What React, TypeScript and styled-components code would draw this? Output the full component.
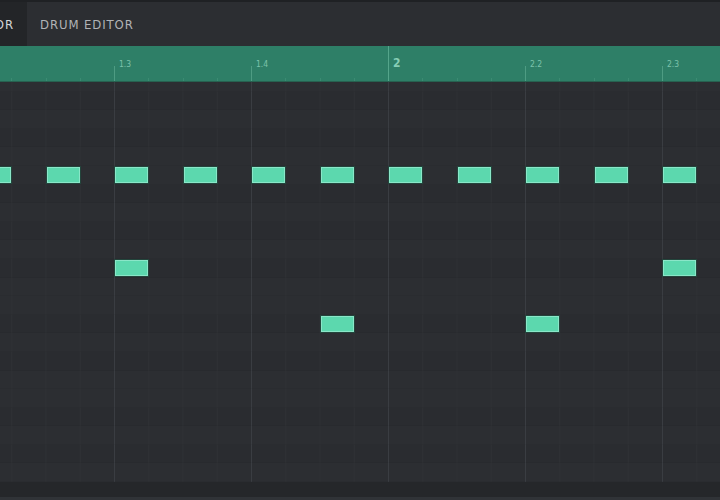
import React from "react";
import styled, { createGlobalStyle } from "styled-components";

// timeline geometry: one 16th step, one beat = 4 steps
const STEP = 34.25;
const BEAT = STEP * 4;
const COLS = 23;
const ROW_H = 18.6;
const ROWS = 23;

// piano-ish shading pattern for the lanes
const DARK_ROWS = [0, 1, 0, 1, 0, 0, 1, 0, 1, 0, 1, 0];

const NOTES: Record<number, number[]> = {
    5: [0, 2, 4, 6, 8, 10, 12, 14, 16, 18, 20],
    10: [4, 20],
    13: [10, 16],
};

const GlobalStyle = createGlobalStyle`
    html, body {
        margin: 0;
        padding: 0;
        background: #2a2c30;
    }
    body {
        font-family: "DejaVu Sans Condensed", "DejaVu Sans", sans-serif;
    }
`;

const Editor = styled.div`
    width: 720px;
    height: 500px;
    display: flex;
    flex-direction: column;
    overflow: hidden;
    background: #2a2c30;
`;

const TabBar = styled.div`
    height: 44px;
    flex: none;
    display: flex;
    background: #2c2e32;
    border-top: 2px solid #1f2124;
`;

const Tab = styled.div<{ $active?: boolean }>`
    display: flex;
    align-items: center;
    padding: 0 13px;
    white-space: nowrap;
    font-size: 13px;
    letter-spacing: 0.9px;
    font-stretch: condensed;
    color: ${(p) => (p.$active ? "#d4d6d8" : "#b1b3b6")};
    background: ${(p) => (p.$active ? "#232528" : "transparent")};
`;

// the active tab is scrolled partly off the left edge
const ClippedTab = styled(Tab)`
    width: 27px;
    box-sizing: border-box;
    padding-left: 0;
    justify-content: flex-end;
    overflow: hidden;
`;

const Ruler = styled.div`
    height: 35px;
    flex: none;
    background: #2e7f67;
    border-bottom: 1px solid #276250;
    overflow: hidden;
`;

const RulerTrack = styled.div`
    display: grid;
    grid-template-columns: repeat(${COLS}, ${STEP}px);
    margin-left: -23px;
    height: 100%;
`;

type TickKind = "bar" | "beat" | "step";

const tickLine: Record<TickKind, string> = {
    bar: "linear-gradient(#55a58b, #55a58b) no-repeat left bottom / 1px 100%",
    beat: "linear-gradient(#4e9c83, #4e9c83) no-repeat left bottom / 1px 15px",
    step: "linear-gradient(#3b8b72, #3b8b72) no-repeat left bottom / 1px 3px",
};

const RulerCell = styled.div<{ $kind: TickKind }>`
    background: ${(p) => tickLine[p.$kind]};
    padding: ${(p) => (p.$kind === "bar" ? "10px 0 0 5px" : "13px 0 0 5px")};
    font-family: "DejaVu Sans Condensed", "DejaVu Sans", sans-serif;
    font-size: ${(p) => (p.$kind === "bar" ? "12px" : "8.5px")};
    font-weight: ${(p) => (p.$kind === "bar" ? 700 : 400)};
    color: ${(p) => (p.$kind === "bar" ? "#86cdb5" : "#7cc2aa")};
    white-space: nowrap;
`;

const Grid = styled.div`
    flex: 1;
    overflow: hidden;
`;

const Lanes = styled.div`
    margin-top: -9px;
    margin-left: -23px;
    display: flex;
    flex-direction: column;
`;

const Lane = styled.div<{ $dark: boolean }>`
    height: ${ROW_H}px;
    flex: none;
    display: grid;
    grid-template-columns: repeat(${COLS}, ${STEP}px);
    align-items: center;
    background-color: ${(p) => (p.$dark ? "#2a2c30" : "#2c2e32")};
    background-image: linear-gradient(90deg, #3a3d42 0 1px, transparent 1px),
        linear-gradient(90deg, #2f3135 0 1px, transparent 1px);
    background-size: ${BEAT}px 100%, ${STEP}px 100%;
    box-shadow: inset 0 -1px 0 rgba(0, 0, 0, 0.04);
`;

const Note = styled.div<{ $col: number }>`
    grid-row: 1;
    grid-column: ${(p) => p.$col + 1} / span 1;
    width: calc(100% + 1px);
    height: 18px;
    box-sizing: border-box;
    background: #5cd8ae;
    border: 1px solid #23453c;
    box-shadow: inset 0 0 0 1px #8ae6c8;
`;

const ScrollBar = styled.div`
    height: 15px;
    flex: none;
    background: #25272a;
    border-bottom: 3px solid #303337;
`;

const rulerLabel = (i: number) => {
    const g = 1 + Math.floor(i / 4);
    const bar = Math.floor(g / 4) + 1;
    const beat = (g % 4) + 1;
    return beat === 1 ? `${bar}` : `${bar}.${beat}`;
};

const App: React.FC = () => {
    const cols = Array.from({ length: COLS }, (_, i) => i);
    const rows = Array.from({ length: ROWS }, (_, i) => i);

    return (
        <>
            <GlobalStyle />
            <Editor>
                <TabBar>
                    <ClippedTab $active>NOTE EDITOR</ClippedTab>
                    <Tab>DRUM EDITOR</Tab>
                </TabBar>

                <Ruler>
                    <RulerTrack>
                        {cols.map((i) => {
                            const onBeat = i % 4 === 0;
                            // first beat sits left of the visible area, no label there
                            const label = onBeat && i > 0 ? rulerLabel(i) : "";
                            const kind: TickKind = !onBeat
                                ? "step"
                                : rulerLabel(i).includes(".")
                                ? "beat"
                                : "bar";
                            return (
                                <RulerCell key={i} $kind={kind}>
                                    {label}
                                </RulerCell>
                            );
                        })}
                    </RulerTrack>
                </Ruler>

                <Grid>
                    <Lanes>
                        {rows.map((r) => (
                            <Lane key={r} $dark={DARK_ROWS[r % 12] === 1}>
                                {(NOTES[r] || []).map((c) => (
                                    <Note key={c} $col={c} />
                                ))}
                            </Lane>
                        ))}
                    </Lanes>
                </Grid>

                <ScrollBar />
            </Editor>
        </>
    );
};

export default App;
